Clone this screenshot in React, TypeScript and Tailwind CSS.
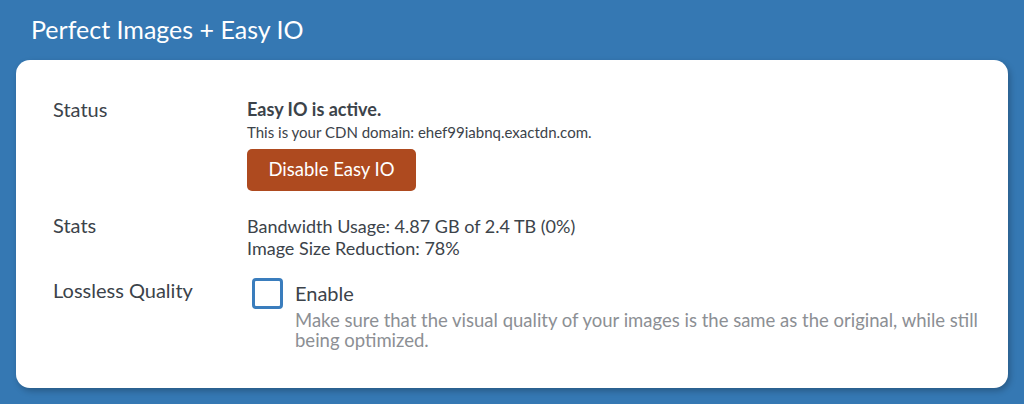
import React from 'react';

const Row: React.FC<{ label: string; labelClass?: string; children: React.ReactNode; className?: string }> = ({
  label,
  labelClass,
  children,
  className,
}) => (
  <div className={`flex ${className ?? ''}`}>
    <div className={`w-[194px] shrink-0 text-[20px] text-[#3c434a] ${labelClass ?? 'leading-[24px]'}`}>{label}</div>
    <div className="flex-1">{children}</div>
  </div>
);

export default function App() {
  return (
    <div className="w-[1024px] h-[404px] bg-[#3578b3] pt-[14px] px-[16px] font-['Lato','Noto_Sans',sans-serif] overflow-hidden">
      <h1 className="text-[25px] leading-[30px] text-white pl-[15px]">Perfect Images + Easy IO</h1>
      <div className="mt-[16px] h-[328px] bg-white rounded-[14px] shadow-[2px_3px_6px_rgba(0,0,0,0.25)] pl-[37px] pt-[37px]">
        <Row label="Status">
          <div className="text-[18px] font-bold text-[#3c434a] leading-[24px]">Easy IO is active.</div>
          <div className="text-[15px] text-[#3c434a] leading-[20px] mt-[1px]">This is your CDN domain: ehef99iabnq.exactdn.com.</div>
          <button className="mt-[7px] w-[169px] h-[42px] bg-[#ae4a1f] text-white text-[18.5px] rounded-[5px]">Disable Easy IO</button>
        </Row>
        <Row label="Stats" labelClass="leading-[20px]" className="mt-[24px]">
          <div className="text-[18px] text-[#3c434a] leading-[22px]">
            <div>Bandwidth Usage: 4.87 GB of 2.4 TB (0%)</div>
            <div>Image Size Reduction: 78%</div>
          </div>
        </Row>
        <Row label="Lossless Quality" className="mt-[19px]">
          <div className="flex items-start">
            <div className="ml-[5px] w-[31px] h-[31px] border-[3px] border-[#3a7dbd] rounded-[4px] shrink-0" />
            <div className="ml-[12px] mt-[3px]">
              <div className="text-[20px] text-[#3c434a] leading-[24px]">Enable</div>
              <div className="mt-[6px] text-[18.5px] text-[#8c8f94] leading-[19.5px] w-[700px]">
                Make sure that the visual quality of your images is the same as the original, while still being optimized.
              </div>
            </div>
          </div>
        </Row>
      </div>
    </div>
  );
}
